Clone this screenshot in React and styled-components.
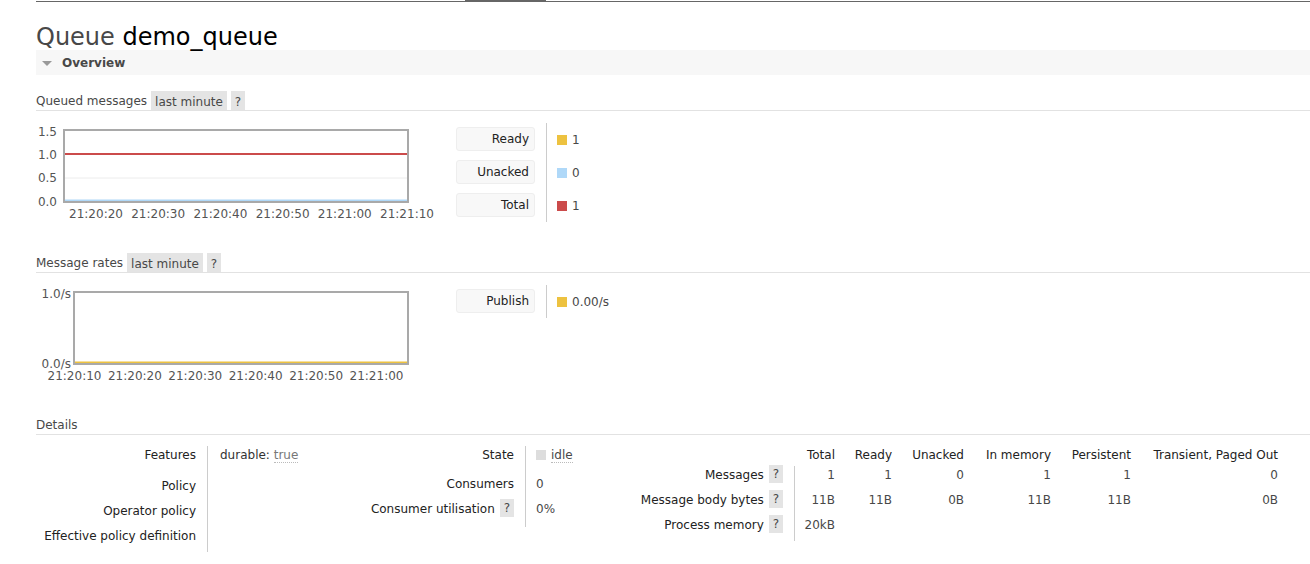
import styled, { createGlobalStyle } from 'styled-components';

const GlobalStyle = createGlobalStyle`
  body {
    margin: 0;
    background: #fff;
    color: #484848;
    font-family: "DejaVu Sans", Verdana, sans-serif;
    font-size: 12px;
  }
`;

const queued = [
  { label: 'Ready', color: '#edc240', value: '1' },
  { label: 'Unacked', color: '#afd8f8', value: '0' },
  { label: 'Total', color: '#cb4b4b', value: '1' },
];

const rates = [{ label: 'Publish', color: '#edc240', value: '0.00/s' }];

const queuedChart = {
  plotX: 28,
  yTicks: [
    { label: '1.5', y: 10 },
    { label: '1.0', y: 33 },
    { label: '0.5', y: 56 },
    { label: '0.0', y: 80 },
  ],
  labelX: 21,
  xTicks: ['21:20:20', '21:20:30', '21:20:40', '21:20:50', '21:21:00', '21:21:10'],
  xStart: 60,
  xStep: 62.2,
  grid: [32, 56],
  series: [
    { y: 78.5, color: '#afd8f8' },
    { y: 32, color: '#cb4b4b' },
  ],
};

const ratesChart = {
  plotX: 38,
  yTicks: [
    { label: '1.0/s', y: 10 },
    { label: '0.0/s', y: 80 },
  ],
  labelX: 35,
  xTicks: ['21:20:10', '21:20:20', '21:20:30', '21:20:40', '21:20:50', '21:21:00'],
  xStart: 38.5,
  xStep: 60.4,
  grid: [],
  series: [{ y: 78.5, color: '#edc240' }],
};

const msgCols = ['Total', 'Ready', 'Unacked', 'In memory', 'Persistent', 'Transient, Paged Out'];
const msgWidths = [46, 57, 72, 87, 80, 147];
const msgRows = [
  { label: 'Messages', values: ['1', '1', '0', '1', '1', '0'] },
  { label: 'Message body bytes', values: ['11B', '11B', '0B', '11B', '11B', '0B'] },
  { label: 'Process memory', values: ['20kB', '', '', '', '', ''] },
];

function Chart({ config }) {
  const { plotX, yTicks, labelX, xTicks, xStart, xStep, grid, series } = config;
  return (
    <ChartSvg width="420" height="100" viewBox="0 0 420 100">
      <rect x={plotX} y="8" width={372 - plotX} height="72" fill="#fff" />
      {grid.map((g) => (
        <line key={g} x1={plotX} x2="372" y1={g} y2={g} stroke="#ececec" strokeWidth="1" />
      ))}
      {series.map((s, i) => (
        <line key={i} x1={plotX} x2="372" y1={s.y} y2={s.y} stroke={s.color} strokeWidth="2" />
      ))}
      <rect x={plotX} y="8" width={372 - plotX} height="72" fill="none" stroke="#a9a9a9" strokeWidth="2" />
      {yTicks.map((t) => (
        <text key={t.label} x={labelX} y={t.y} dy="0.36em" textAnchor="end">
          {t.label}
        </text>
      ))}
      {xTicks.map((t, i) => (
        <text key={t} x={xStart + i * xStep} y="92" dy="0.36em" textAnchor="middle">
          {t}
        </text>
      ))}
    </ChartSvg>
  );
}

function Legend({ items }) {
  return (
    <LegendBox>
      <LegendKeys>
        {items.map((it) => (
          <LegendKey key={it.label}>{it.label}</LegendKey>
        ))}
      </LegendKeys>
      <LegendValues>
        {items.map((it) => (
          <LegendValue key={it.label}>
            <Swatch $color={it.color} />
            {it.value}
          </LegendValue>
        ))}
      </LegendValues>
    </LegendBox>
  );
}

export default function App() {
  return (
    <>
      <GlobalStyle />
      <Page>
        <Nav>
          <NavTab />
        </Nav>
        <Title>
          Queue <b>demo_queue</b>
        </Title>
        <Section>
          <Caret />
          Overview
        </Section>

        <Heading $top={16}>
          <HeadingText>Queued messages</HeadingText>
          <Badge>last minute</Badge>
          <Badge>?</Badge>
        </Heading>
        <ChartRow>
          <Chart config={queuedChart} />
          <Legend items={queued} />
        </ChartRow>

        <Heading $top={31}>
          <HeadingText>Message rates</HeadingText>
          <Badge>last minute</Badge>
          <Badge>?</Badge>
        </Heading>
        <ChartRow>
          <Chart config={ratesChart} />
          <Legend items={rates} />
        </ChartRow>

        <Heading $top={32}>
          <HeadingText>Details</HeadingText>
        </Heading>

        <DetailsRow>
          <Table $cols="172px 112px">
            <Th $h={31}>Features</Th>
            <Td $h={31}>
              <Strong>durable:</Strong> <Abbr>true</Abbr>
            </Td>
            <Th $h={25}>Policy</Th>
            <Td $h={25} />
            <Th $h={25}>Operator policy</Th>
            <Td $h={25} />
            <Th $h={25}>Effective policy definition</Th>
            <Td $h={25} />
          </Table>

          <Table $cols="206px 74px">
            <Th $h={29}>State</Th>
            <Td $h={29} $pad={10}>
              <StateDot />
              <Abbr $dark>idle</Abbr>
            </Td>
            <Th $h={25}>Consumers</Th>
            <Td $h={25} $pad={10}>0</Td>
            <Th $h={27}>
              Consumer utilisation <HelpBadge>?</HelpBadge>
            </Th>
            <Td $h={27} $pad={10}>0%</Td>
          </Table>

          <Table $cols={`195px ${msgWidths.map((w) => w + 'px').join(' ')}`}>
            <Th $h={20} $plain />
            {msgCols.map((c) => (
              <ColHead key={c}>{c}</ColHead>
            ))}
            {msgRows.map((r) => (
              <Row key={r.label}>
                <Th $h={25}>
                  {r.label} <HelpBadge>?</HelpBadge>
                </Th>
                {r.values.map((v, i) => (
                  <Num key={i}>{v}</Num>
                ))}
              </Row>
            ))}
          </Table>
        </DetailsRow>
      </Page>
    </>
  );
}

const Page = styled.div`
  padding-left: 36px;
  padding-bottom: 20px;
`;

const Nav = styled.div`
  display: flex;
  height: 1px;
  border-bottom: 1px solid #666;
`;

const NavTab = styled.span`
  margin-left: 429px;
  width: 81px;
  height: 1px;
  background: #666;
`;

const Title = styled.h1`
  margin: 21px 0 0;
  height: 27px;
  font-size: 24px;
  line-height: 28px;
  font-weight: normal;
  color: #484848;

  b {
    font-weight: normal;
    color: #000;
  }
`;

const Section = styled.div`
  display: flex;
  align-items: center;
  box-sizing: border-box;
  height: 25px;
  padding: 1px 0 0 6px;
  background: #f7f7f7;
  font-weight: bold;
  color: #484848;
`;

const Caret = styled.span`
  width: 0;
  height: 0;
  margin-right: 10px;
  border-left: 5px solid transparent;
  border-right: 5px solid transparent;
  border-top: 5px solid #999;
`;

const Heading = styled.div`
  display: flex;
  align-items: flex-end;
  gap: 4px;
  margin-top: ${(p) => p.$top}px;
  border-bottom: 1px solid #e2e2e2;
  color: #484848;
`;

const HeadingText = styled.span`
  line-height: 16px;
  padding: 1px 0 1px;
`;

const Badge = styled.span`
  padding: 3px 4px 0;
  line-height: 16px;
  background: #e4e4e4;
  color: #484848;
`;

const ChartRow = styled.div`
  display: flex;
  align-items: flex-start;
  margin-top: 11px;
  height: 100px;
`;

const ChartSvg = styled.svg`
  display: block;
  flex: none;
  font-family: "DejaVu Sans", Verdana, sans-serif;
  font-size: 12px;
  fill: #545454;
`;

const LegendBox = styled.div`
  display: flex;
  margin-top: 1px;
`;

const LegendKeys = styled.div`
  display: flex;
  flex-direction: column;
  gap: 9px;
  padding: 4px 11px 5px 0;
  border-right: 1px solid #ccc;
`;

const LegendKey = styled.div`
  box-sizing: border-box;
  width: 79px;
  height: 24px;
  padding: 1px 5px 0 0;
  line-height: 21px;
  text-align: right;
  color: #222;
  background: #f8f8f8;
  border: 1px solid #eee;
  border-radius: 3px;
`;

const LegendValues = styled.div`
  display: flex;
  flex-direction: column;
  gap: 9px;
  padding: 4px 0 5px 10px;
`;

const LegendValue = styled.div`
  display: flex;
  align-items: center;
  gap: 5px;
  box-sizing: border-box;
  height: 24px;
  padding-top: 1px;
  color: #484848;
`;

const Swatch = styled.span`
  width: 10px;
  height: 10px;
  background: ${(p) => p.$color};
`;

const DetailsRow = styled.div`
  display: flex;
  align-items: flex-start;
  margin-top: 11px;
`;

const Table = styled.div`
  display: grid;
  grid-template-columns: ${(p) => p.$cols};
  line-height: 16px;
`;

const Row = styled.div`
  display: contents;
`;

const Th = styled.div`
  box-sizing: border-box;
  height: ${(p) => p.$h}px;
  padding: 1px 11px 0 0;
  text-align: right;
  color: #222;
  white-space: nowrap;
  border-right: 1px solid ${(p) => (p.$plain ? 'transparent' : '#ccc')};
`;

const Td = styled.div`
  box-sizing: border-box;
  height: ${(p) => p.$h}px;
  padding: 1px 0 0 ${(p) => p.$pad ?? 12}px;
  white-space: nowrap;
  color: #484848;
`;

const ColHead = styled.div`
  box-sizing: border-box;
  height: 20px;
  padding: 1px 6px 0 0;
  text-align: right;
  white-space: nowrap;
  color: #222;
`;

const Num = styled.div`
  box-sizing: border-box;
  height: 25px;
  padding: 1px 6px 0 0;
  text-align: right;
  color: #484848;
`;

const HelpBadge = styled.span`
  display: inline-block;
  margin-left: 1px;
  margin-top: -2px;
  padding: 1px 4px;
  vertical-align: top;
  background: #e4e4e4;
  color: #484848;
`;

const Strong = styled.span`
  color: #333;
`;

const Abbr = styled.span`
  color: ${(p) => (p.$dark ? '#484848' : '#777')};
  border-bottom: 1px dotted #bbb;
`;

const StateDot = styled.span`
  display: inline-block;
  width: 10px;
  height: 10px;
  margin-right: 5px;
  vertical-align: -1px;
  background: #ddd;
`;
